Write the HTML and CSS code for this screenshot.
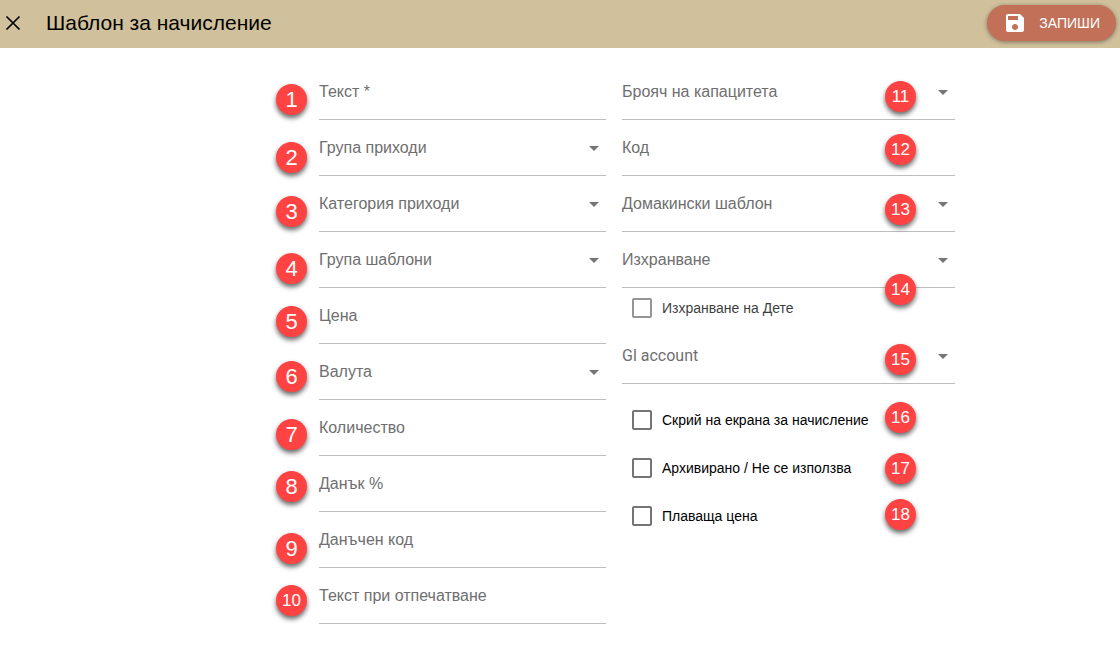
FILE: index.html
```html
<!DOCTYPE html>
<html lang="bg">
<head>
    <meta charset="UTF-8">
    <title>Шаблон за начисление</title>
    <link rel="stylesheet" href="styles.css">
</head>
<body>
<header class="toolbar">
    <button type="button" class="close" aria-label="Затвори">
        <svg width="24" height="24" viewBox="0 0 24 24"><path fill="none" stroke="#000" stroke-width="1.7" d="M5.5 5.5l13 13M18.5 5.5l-13 13"/></svg>
    </button>
    <h1 class="title">Шаблон за начисление</h1>
    <button type="submit" form="template" class="save">
        <svg width="24" height="24" viewBox="0 0 24 24"><path fill="#fff" d="M17 3H5c-1.11 0-2 .9-2 2v14c0 1.1.89 2 2 2h14c1.1 0 2-.9 2-2V7l-4-4zm-5 16c-1.66 0-3-1.34-3-3s1.34-3 3-3 3 1.34 3 3-1.34 3-3 3zm3-10H5V5h10v4z"/></svg>
        <span>ЗАПИШИ</span>
    </button>
</header>

<form id="template" class="form">
    <div class="column column-left">
        <div class="field">
            <label for="text">Текст *</label>
            <input type="text" id="text">
        </div>
        <div class="field select">
            <label for="group">Група приходи</label>
            <select id="group"><option></option></select>
        </div>
        <div class="field select">
            <label for="category">Категория приходи</label>
            <select id="category"><option></option></select>
        </div>
        <div class="field select">
            <label for="template-group">Група шаблони</label>
            <select id="template-group"><option></option></select>
        </div>
        <div class="field">
            <label for="price">Цена</label>
            <input type="text" id="price">
        </div>
        <div class="field select">
            <label for="currency">Валута</label>
            <select id="currency"><option></option></select>
        </div>
        <div class="field">
            <label for="quantity">Количество</label>
            <input type="text" id="quantity">
        </div>
        <div class="field">
            <label for="tax">Данък %</label>
            <input type="text" id="tax">
        </div>
        <div class="field">
            <label for="tax-code">Данъчен код</label>
            <input type="text" id="tax-code">
        </div>
        <div class="field">
            <label for="print-text">Текст при отпечатване</label>
            <input type="text" id="print-text">
        </div>

        <!-- номера към полетата -->
        <span class="pin" style="top: 20px">1</span>
        <span class="pin" style="top: 78px">2</span>
        <span class="pin" style="top: 132px">3</span>
        <span class="pin" style="top: 189px">4</span>
        <span class="pin" style="top: 242px">5</span>
        <span class="pin" style="top: 297px">6</span>
        <span class="pin" style="top: 355px">7</span>
        <span class="pin" style="top: 407px">8</span>
        <span class="pin" style="top: 469px">9</span>
        <span class="pin small" style="top: 521px">10</span>
    </div>

    <div class="column column-right">
        <div class="field select">
            <label for="counter">Брояч на капацитета</label>
            <select id="counter"><option></option></select>
        </div>
        <div class="field">
            <label for="code">Код</label>
            <input type="text" id="code">
        </div>
        <div class="field select">
            <label for="house">Домакински шаблон</label>
            <select id="house"><option></option></select>
        </div>
        <div class="field select">
            <label for="board">Изхранване</label>
            <select id="board"><option></option></select>
        </div>
        <div class="check muted">
            <input type="checkbox" id="child">
            <label for="child">Изхранване на Дете</label>
        </div>
        <div class="field select">
            <label for="gl" class="latin">Gl account</label>
            <select id="gl"><option></option></select>
        </div>
        <div class="checks">
            <div class="check">
                <input type="checkbox" id="hide">
                <label for="hide">Скрий на екрана за начисление</label>
            </div>
            <div class="check">
                <input type="checkbox" id="archived">
                <label for="archived">Архивирано / Не се използва</label>
            </div>
            <div class="check">
                <input type="checkbox" id="floating">
                <label for="floating">Плаваща цена</label>
            </div>
        </div>

        <span class="pin small" style="top: 17px">11</span>
        <span class="pin small" style="top: 70px">12</span>
        <span class="pin small" style="top: 130px">13</span>
        <span class="pin small" style="top: 210px">14</span>
        <span class="pin small" style="top: 280px">15</span>
        <span class="pin small" style="top: 338px">16</span>
        <span class="pin small" style="top: 389px">17</span>
        <span class="pin small" style="top: 435px">18</span>
    </div>
</form>
</body>
</html>
```
FILE: styles.css
```css
*{
    box-sizing: border-box;
}
body{
    margin: 0;
    background-color: #fff;
    font-family: "Liberation Sans", Arial, sans-serif;
    color: #000;
}
button{
    border: 0;
    padding: 0;
    font-family: inherit;
    cursor: pointer;
}
.toolbar{
    display: flex;
    align-items: center;
    height: 48px;
    padding: 0 4px 2px 1px;
    background-color: #d0c09c;
}
.close{
    display: flex;
    background: none;
}
.title{
    flex: 1;
    margin: 0 0 0 21px;
    font-size: 21px;
    font-weight: normal;
    line-height: 28px;
}
.save{
    display: flex;
    align-items: center;
    gap: 12px;
    height: 36px;
    padding: 0 16px;
    border-radius: 18px;
    background-color: #c27058;
    box-shadow: 0 1px 4px rgba(0,0,0,0.4);
    color: #fff;
    font-size: 14px;
}
.form{
    display: grid;
    grid-template-columns: 287fr 333fr;
    gap: 16px;
    padding: 16px 165px 32px 319px;
}
.column{
    position: relative;
}

/* поле с надпис върху празната контрола */
.field{
    display: grid;
    height: 56px;
    border-bottom: 1px solid #bdbdbd;
}
.field label,
.field input,
.field select{
    grid-area: 1 / 1;
}
.field label{
    padding-top: 18px;
    color: #6f6f6f;
    font-size: 16px;
    line-height: 20px;
    pointer-events: none;
}
.field .latin{
    font-family: Roboto, sans-serif;
}
.field input,
.field select{
    width: 100%;
    border: 0;
    padding: 16px 0 0;
    background: none;
    outline: none;
    appearance: none;
    font-size: 16px;
}
.select::after{
    content: "";
    grid-area: 1 / 1;
    justify-self: end;
    margin: 26px 7px 0 0;
    width: 10px;
    height: 5px;
    background-color: #757575;
    clip-path: polygon(0 0, 100% 0, 50% 100%);
    pointer-events: none;
}

.check{
    display: flex;
    align-items: center;
    gap: 10px;
    height: 48px;
    padding-left: 10px;
    font-size: 14px;
}
.check input{
    appearance: none;
    margin: 0;
    width: 20px;
    height: 20px;
    border: 2px solid #757575;
    border-radius: 2px;
}
.check.muted{
    height: 40px;
    opacity: 0.76;
}
.checks{
    padding-top: 12px;
}

.pin{
    position: absolute;
    left: -43px;
    width: 31px;
    height: 31px;
    border-radius: 50%;
    background-color: #ff4343;
    box-shadow: 0 3px 5px rgba(0,0,0,0.6);
    color: #fff;
    font-size: 22px;
    line-height: 32px;
    text-align: center;
}
.pin.small{
    font-size: 17px;
}
.column-right .pin{
    left: auto;
    right: 39px;
}
```
